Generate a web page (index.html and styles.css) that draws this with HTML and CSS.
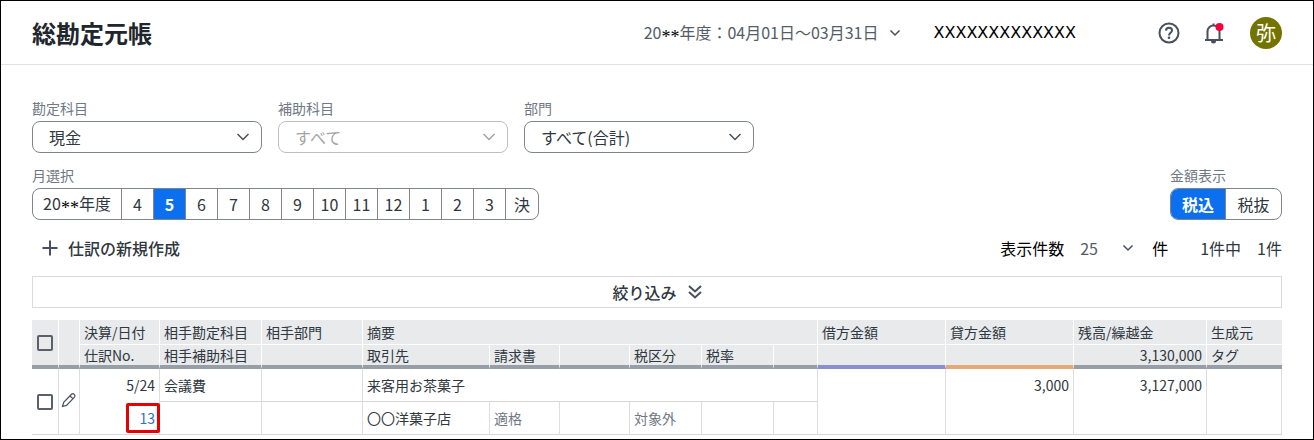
FILE: index.html
```html
<!DOCTYPE html>
<html lang="ja">
<head>
  <meta charset="UTF-8">
  <meta name="viewport" content="width=device-width, initial-scale=1.0">
  <title>総勘定元帳</title>
  <link rel="stylesheet" href="styles.css">
</head>
<body>
  <header class="header">
    <h1 class="title">総勘定元帳</h1>
    <button type="button" class="period">
      <span>20<span class="mask">**</span>年度：04月01日～03月31日</span>
      <svg width="12" height="8" viewBox="0 0 12 8"><path d="M1.5 1.5L6 6l4.5-4.5"/></svg>
    </button>
    <span class="company">XXXXXXXXXXXXX</span>
    <button type="button" class="icon-button help" aria-label="ヘルプ">
      <svg width="22" height="22" viewBox="0 0 22 22">
        <circle cx="11" cy="11" r="9.5"/>
        <path d="M8 8.6C8.1 6.8 9.3 5.8 11 5.8s3 1 3 2.7c0 2.2-3 2.5-3 4.9"/>
        <circle class="dot" cx="11" cy="15.8" r="1.3"/>
      </svg>
    </button>
    <button type="button" class="icon-button bell" aria-label="お知らせ">
      <svg width="22" height="22" viewBox="0 0 22 22">
        <path d="M2 18h18M4.5 18V9.500a6 6 0 0 1 12 0V18M10.500 3.500V1.500"/>
        <path class="dot" d="M8 19h5a2.500 2.500 0 0 1-5 0z"/>
        <circle class="badge" cx="16.500" cy="5" r="4"/>
      </svg>
    </button>
    <button type="button" class="avatar">弥</button>
  </header>

  <main class="main">
    <div class="filters">
      <div class="field">
        <label for="account">勘定科目</label>
        <div class="select">
          <select id="account"><option>現金</option></select>
          <svg width="14" height="10" viewBox="0 0 14 10"><path d="M1.500 2L7 7.500 12.500 2"/></svg>
        </div>
      </div>
      <div class="field">
        <label for="sub-account">補助科目</label>
        <div class="select disabled">
          <select id="sub-account" disabled><option>すべて</option></select>
          <svg width="14" height="10" viewBox="0 0 14 10"><path d="M1.500 2L7 7.500 12.500 2"/></svg>
        </div>
      </div>
      <div class="field">
        <label for="department">部門</label>
        <div class="select">
          <select id="department"><option>すべて(合計)</option></select>
          <svg width="14" height="10" viewBox="0 0 14 10"><path d="M1.500 2L7 7.500 12.500 2"/></svg>
        </div>
      </div>
    </div>

    <div class="switches">
      <div class="field" role="group" aria-labelledby="month-label">
        <span class="label" id="month-label">月選択</span>
        <div class="segments months">
          <button type="button" class="year">20<span class="mask">**</span>年度</button>
          <button type="button">4</button>
          <button type="button" class="active">5</button>
          <button type="button">6</button>
          <button type="button">7</button>
          <button type="button">8</button>
          <button type="button">9</button>
          <button type="button">10</button>
          <button type="button">11</button>
          <button type="button">12</button>
          <button type="button">1</button>
          <button type="button">2</button>
          <button type="button">3</button>
          <button type="button">決</button>
        </div>
      </div>
      <div class="field" role="group" aria-labelledby="tax-label">
        <span class="label" id="tax-label">金額表示</span>
        <div class="segments tax">
          <button type="button" class="active">税込</button>
          <button type="button">税抜</button>
        </div>
      </div>
    </div>

    <div class="toolbar">
      <button type="button" class="create">
        <svg width="16" height="16" viewBox="0 0 16 16"><path d="M8 .5v15M.5 8h15"/></svg>
        仕訳の新規作成
      </button>
      <label for="page-size">表示件数</label>
      <div class="page-size">
        <select id="page-size"><option>25</option></select>
        <svg width="12" height="8" viewBox="0 0 12 8"><path d="M1.500 1.500L6 6l4.500-4.500"/></svg>
      </div>
      <span class="unit">件</span>
      <span class="range">1件中</span>
      <span class="total">1件</span>
    </div>

    <button type="button" class="narrow">
      絞り込み
      <svg width="14" height="14" viewBox="0 0 14 14"><path d="M1 1l6 5.500L13 1M1 7l6 5.500L13 7"/></svg>
    </button>

    <table class="ledger">
      <colgroup>
        <col class="w-check"><col class="w-edit"><col class="w-date"><col class="w-account"><col class="w-dept">
        <col><col class="w-invoice"><col class="w-invoice"><col class="w-tax"><col class="w-tax"><col class="w-blank">
        <col class="w-amount"><col class="w-amount"><col class="w-balance"><col class="w-source">
      </colgroup>
      <thead>
        <tr>
          <th rowspan="2" class="check bar"><input type="checkbox" aria-label="すべて選択"></th>
          <th rowspan="2" class="bar"></th>
          <th>決算/日付</th>
          <th>相手勘定科目</th>
          <th>相手部門</th>
          <th colspan="6">摘要</th>
          <th>借方金額</th>
          <th>貸方金額</th>
          <th>残高/繰越金</th>
          <th>生成元</th>
        </tr>
        <tr>
          <th class="bar">仕訳No.</th>
          <th class="bar">相手補助科目</th>
          <th class="bar"></th>
          <th class="bar">取引先</th>
          <th class="bar">請求書</th>
          <th class="bar"></th>
          <th class="bar">税区分</th>
          <th class="bar">税率</th>
          <th class="bar"></th>
          <th class="bar debit"></th>
          <th class="bar credit"></th>
          <th class="bar number">3,130,000</th>
          <th class="bar">タグ</th>
        </tr>
      </thead>
      <tbody>
        <tr>
          <td rowspan="2" class="check"><input type="checkbox" aria-label="仕訳13を選択"></td>
          <td rowspan="2" class="edit">
            <button type="button" aria-label="編集">
              <svg width="16" height="16" viewBox="0 0 16 16"><path d="M1.500 14.500l1.200-4.200 7.800-8c1.800-1.700 4.600.800 3 2.900l-8 8.200zM9 4l3.200 2.900"/></svg>
            </button>
          </td>
          <td class="number open">5/24</td>
          <td>会議費</td>
          <td></td>
          <td colspan="6">来客用お茶菓子</td>
          <td rowspan="2"></td>
          <td rowspan="2" class="number">3,000</td>
          <td rowspan="2" class="number">3,127,000</td>
          <td rowspan="2"></td>
        </tr>
        <tr>
          <td class="number"><a href="#13" class="entry">13</a></td>
          <td></td>
          <td></td>
          <td>〇〇洋菓子店</td>
          <td class="muted">適格</td>
          <td></td>
          <td class="muted">対象外</td>
          <td></td>
          <td></td>
        </tr>
      </tbody>
    </table>
  </main>
</body>
</html>
```
FILE: styles.css
```css
* {
  box-sizing: border-box;
}
body {
  margin: 0;
  min-height: 100vh;
  border: 1px solid #000;
  background: #fff;
  color: #2f3740;
  font-family: "Noto Sans CJK JP", sans-serif;
  font-size: 16px;
  line-height: 24px;
}
button, select, input {
  margin: 0;
  font: inherit;
  color: inherit;
}
button {
  padding: 0;
  border: none;
  background: none;
  cursor: pointer;
}
svg {
  display: block;
  flex: none;
  fill: none;
  stroke: #47505c;
  stroke-width: 1.5;
}
.mask {
  color: #000;
  font-family: "Liberation Serif", serif;
  font-size: 18px;
  line-height: 1;
  vertical-align: -4px;
}

/* header */
.header {
  display: flex;
  align-items: center;
  height: 64px;
  padding: 0 31px;
  border-bottom: 1px solid #dfe1e3;
}
.title {
  margin: 0 auto 0 0;
  color: #20262c;
  font-size: 24px;
  line-height: 32px;
  font-weight: 700;
}
.period {
  display: flex;
  align-items: center;
  gap: 10px;
  color: #535c68;
}
.company {
  margin-left: 33px;
  color: #000;
  font-family: "DejaVu Sans", sans-serif;
}
.icon-button svg {
  stroke-width: 2;
}
.icon-button .dot {
  fill: #47505c;
  stroke: none;
}
.icon-button .badge {
  fill: #f5003d;
  stroke: none;
}
.help {
  margin-left: 82px;
}
.bell {
  margin-left: 23px;
}
.avatar {
  width: 32px;
  height: 32px;
  margin-left: 25px;
  border-radius: 50%;
  background: #737300;
  color: #fff;
  font-size: 20px;
  line-height: 32px;
}

/* filters */
.main {
  padding: 33px 31px 4px;
}
.filters {
  display: flex;
  gap: 16px;
}
.field label,
.label {
  display: block;
  margin-bottom: 3px;
  color: #6f7883;
  font-size: 14px;
  line-height: 20px;
}
.select {
  position: relative;
  width: 230px;
}
.select select {
  display: block;
  width: 100%;
  height: 32px;
  padding: 0 36px 0 16px;
  border: 1px solid #7f858d;
  border-radius: 8px;
  background: #fff;
  appearance: none;
}
.select svg {
  position: absolute;
  top: 11px;
  right: 12px;
  pointer-events: none;
}
.disabled select {
  border-color: #bcc0c4;
  color: #a0a5aa;
  opacity: 1;
}
.disabled svg {
  stroke: #a0a5aa;
}

/* month and tax switches */
.switches {
  display: flex;
  justify-content: space-between;
  margin-top: 12px;
}
.segments {
  display: flex;
  border: 1px solid #7f858d;
  border-radius: 8px;
  overflow: hidden;
}
.segments button {
  width: 32px;
  height: 30px;
  border-right: 1px solid #7f858d;
}
.segments button:last-child {
  border-right: none;
}
.segments .year {
  width: 89px;
}
.segments .active {
  background: #0b6ff0;
  color: #fff;
  font-weight: 700;
}
.tax button {
  width: 55px;
}

/* toolbar */
.toolbar {
  display: flex;
  align-items: center;
  height: 32px;
  margin: 12px 0;
  color: #000;
}
.create {
  display: flex;
  align-items: center;
  gap: 10px;
  margin: 0 auto 0 10px;
  color: #2f3740;
  font-weight: 500;
}
.create svg,
.narrow svg {
  stroke-width: 2;
}
.page-size {
  position: relative;
  margin: 0 18px 0 16px;
}
.page-size select {
  display: block;
  width: 54px;
  height: 24px;
  padding: 0;
  border: none;
  background: none;
  color: #535c68;
  appearance: none;
}
.page-size svg {
  position: absolute;
  top: 8px;
  right: 0;
  pointer-events: none;
}
.range {
  margin: 0 16px 0 32px;
}
.range,
.total {
  color: #2f3740;
}
.narrow {
  display: flex;
  align-items: center;
  justify-content: center;
  gap: 11px;
  width: 100%;
  height: 32px;
  border: 1px solid #d9dadb;
  font-weight: 500;
}

/* ledger table */
.ledger {
  width: 100%;
  margin-top: 12px;
  border-collapse: separate;
  border-spacing: 0;
  table-layout: fixed;
  font-size: 14px;
  line-height: 20px;
}
.w-check { width: 27px; }
.w-edit { width: 21px; }
.w-date { width: 80px; }
.w-account { width: 102px; }
.w-dept { width: 101px; }
.w-invoice { width: 70px; }
.w-tax { width: 72px; }
.w-blank { width: 44px; }
.w-amount { width: 128px; }
.w-balance { width: 133px; }
.w-source { width: 75px; }
.ledger th {
  height: 25px;
  padding: 0 4px;
  border-right: 1px solid #fff;
  border-bottom: 1px solid #fff;
  background: #e8eaec;
  font-weight: 400;
  text-align: left;
  white-space: nowrap;
}
.ledger th:last-child {
  border-right: none;
}
.ledger .bar {
  height: 24px;
  border-bottom: 4px solid #989ea5;
}
.ledger .debit {
  border-bottom-color: #8b8fd0;
}
.ledger .credit {
  border-bottom-color: #e5a978;
}
.ledger td {
  height: 33px;
  padding: 6px 4px;
  border-right: 1px solid #dcdee3;
  border-bottom: 1px solid #d5d7da;
  vertical-align: top;
}
.ledger .open {
  border-bottom: none;
}
.ledger .number {
  text-align: right;
}
.ledger .muted {
  color: #6f7883;
}
.ledger .check,
.ledger .edit {
  padding: 0;
  text-align: center;
  vertical-align: middle;
}
.ledger input {
  display: block;
  width: 16px;
  height: 16px;
  margin: 0 auto;
  border: 2px solid #5a6069;
  border-radius: 2px;
  background: #fff;
  appearance: none;
}
.ledger th input {
  background: none;
}
.edit svg {
  stroke-width: 1.2;
}
.entry {
  position: relative;
  color: #2f6fc4;
  text-decoration: none;
}
.entry::after {
  content: "";
  position: absolute;
  inset: -5px -5px -5px -13px;
  border: 3px solid #e60000;
  border-radius: 2px;
}
```
